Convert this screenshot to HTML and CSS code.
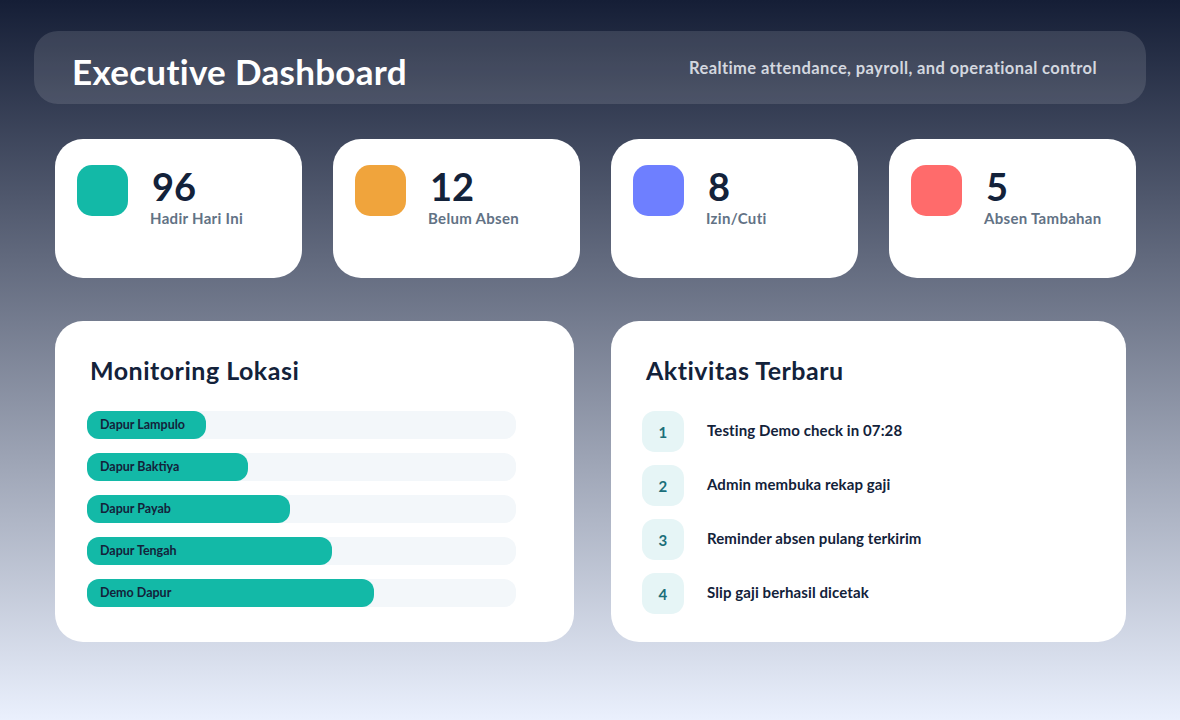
FILE: index.html
```html
<!DOCTYPE html>
<html lang="en">
<head>
    <meta charset="UTF-8">
    <meta name="viewport" content="width=device-width, initial-scale=1.0">
    <title>Executive Dashboard</title>
    <link rel="stylesheet" href="styles.css">
</head>
<body>
    <div class="page">
        <header class="hero">
            <h1>Executive Dashboard</h1>
            <p>Realtime attendance, payroll, and operational control</p>
        </header>

        <div class="stats">
            <div class="stat-card">
                <div class="stat-icon teal"></div>
                <div class="stat-text">
                    <div class="stat-value">96</div>
                    <div class="stat-label">Hadir Hari Ini</div>
                </div>
            </div>
            <div class="stat-card">
                <div class="stat-icon orange"></div>
                <div class="stat-text">
                    <div class="stat-value">12</div>
                    <div class="stat-label">Belum Absen</div>
                </div>
            </div>
            <div class="stat-card">
                <div class="stat-icon blue"></div>
                <div class="stat-text">
                    <div class="stat-value">8</div>
                    <div class="stat-label">Izin/Cuti</div>
                </div>
            </div>
            <div class="stat-card">
                <div class="stat-icon red"></div>
                <div class="stat-text">
                    <div class="stat-value">5</div>
                    <div class="stat-label">Absen Tambahan</div>
                </div>
            </div>
        </div>

        <div class="panels">
            <section class="panel">
                <h2>Monitoring Lokasi</h2>
                <div class="bars">
                    <div class="bar-track"><div class="bar-fill" style="width: 27.7%;">Dapur Lampulo</div></div>
                    <div class="bar-track"><div class="bar-fill" style="width: 37.5%;">Dapur Baktiya</div></div>
                    <div class="bar-track"><div class="bar-fill" style="width: 47.3%;">Dapur Payab</div></div>
                    <div class="bar-track"><div class="bar-fill" style="width: 57.1%;">Dapur Tengah</div></div>
                    <div class="bar-track"><div class="bar-fill" style="width: 66.9%;">Demo Dapur</div></div>
                </div>
            </section>

            <section class="panel">
                <h2>Aktivitas Terbaru</h2>
                <ul class="activity">
                    <li><span class="step">1</span><span class="activity-text">Testing Demo check in 07:28</span></li>
                    <li><span class="step">2</span><span class="activity-text">Admin membuka rekap gaji</span></li>
                    <li><span class="step">3</span><span class="activity-text">Reminder absen pulang terkirim</span></li>
                    <li><span class="step">4</span><span class="activity-text">Slip gaji berhasil dicetak</span></li>
                </ul>
            </section>
        </div>
    </div>
</body>
</html>
```

FILE: styles.css
```css
body {
    margin: 0;
    padding: 0;
    min-height: 720px;
    font-family: Lato, "Open Sans", sans-serif;
    color: #13223a;
    background: linear-gradient(180deg, #151e36 0%, #eaf0fd 100%);
}
.page {
    padding: 31px 34px;
}
.hero {
    height: 73px;
    box-sizing: border-box;
    padding: 0 49px 0 38px;
    display: flex;
    align-items: center;
    justify-content: space-between;
    background: rgba(255, 255, 255, 0.12);
    border-radius: 24px;
}
.hero h1 {
    margin: 6px 0 0;
    font-size: 35px;
    font-weight: 700;
    letter-spacing: 0.3px;
    color: #ffffff;
}
.hero p {
    margin: 0;
    font-size: 16.5px;
    font-weight: 700;
    letter-spacing: 0.4px;
    color: #d3d7df;
}
.stats {
    margin-top: 35px;
    padding-left: 21px;
    display: grid;
    grid-template-columns: repeat(4, 247px);
    gap: 31px;
}
.stat-card {
    height: 139px;
    box-sizing: border-box;
    padding: 26px 22px;
    display: flex;
    align-items: flex-start;
    background: #ffffff;
    border-radius: 28px;
}
.stat-icon {
    width: 51px;
    height: 51px;
    border-radius: 15px;
    flex-shrink: 0;
}
.teal { background: #13b9a7; }
.orange { background: #f0a43c; }
.blue { background: #6e7fff; }
.red { background: #ff6b6b; }
.stat-text {
    margin-left: 22px;
}
.stat-value {
    font-size: 38px;
    font-weight: 700;
    line-height: 42px;
    margin-left: 2px;
    color: #13223a;
}
.stat-label {
    margin-top: 2px;
    font-size: 15px;
    font-weight: 700;
    letter-spacing: 0.3px;
    color: #627285;
}
.panels {
    margin-top: 43px;
    padding-left: 21px;
    display: grid;
    grid-template-columns: 519px 515px;
    gap: 37px;
}
.panel {
    height: 321px;
    box-sizing: border-box;
    padding: 33px 35px;
    background: #ffffff;
    border-radius: 28px;
}
.panel h2 {
    margin: 0;
    font-size: 25px;
    font-weight: 700;
    line-height: 32px;
    letter-spacing: 0.5px;
}
.bars {
    margin-top: 25px;
    margin-left: -3px;
    width: 429px;
}
.bar-track {
    height: 28px;
    margin-bottom: 14px;
    background: #f3f7fa;
    border-radius: 12px;
}
.bar-fill {
    height: 28px;
    box-sizing: border-box;
    padding-left: 13px;
    line-height: 28px;
    font-size: 12.5px;
    font-weight: 700;
    color: #13223a;
    background: #13b9a7;
    border-radius: 12px;
    white-space: nowrap;
}
.activity {
    list-style: none;
    margin: 25px 0 0 -4px;
    padding: 0;
}
.activity li {
    display: flex;
    align-items: center;
    height: 41px;
    margin-bottom: 13px;
    font-size: 15px;
    font-weight: 700;
    letter-spacing: 0.1px;
    color: #13223a;
}
.activity-text {
    margin-bottom: 3px;
}
.step {
    width: 42px;
    height: 41px;
    margin-right: 23px;
    display: flex;
    align-items: center;
    justify-content: center;
    background: #e6f5f6;
    border-radius: 13px;
    color: #1b6f7a;
    font-size: 15px;
}
```
